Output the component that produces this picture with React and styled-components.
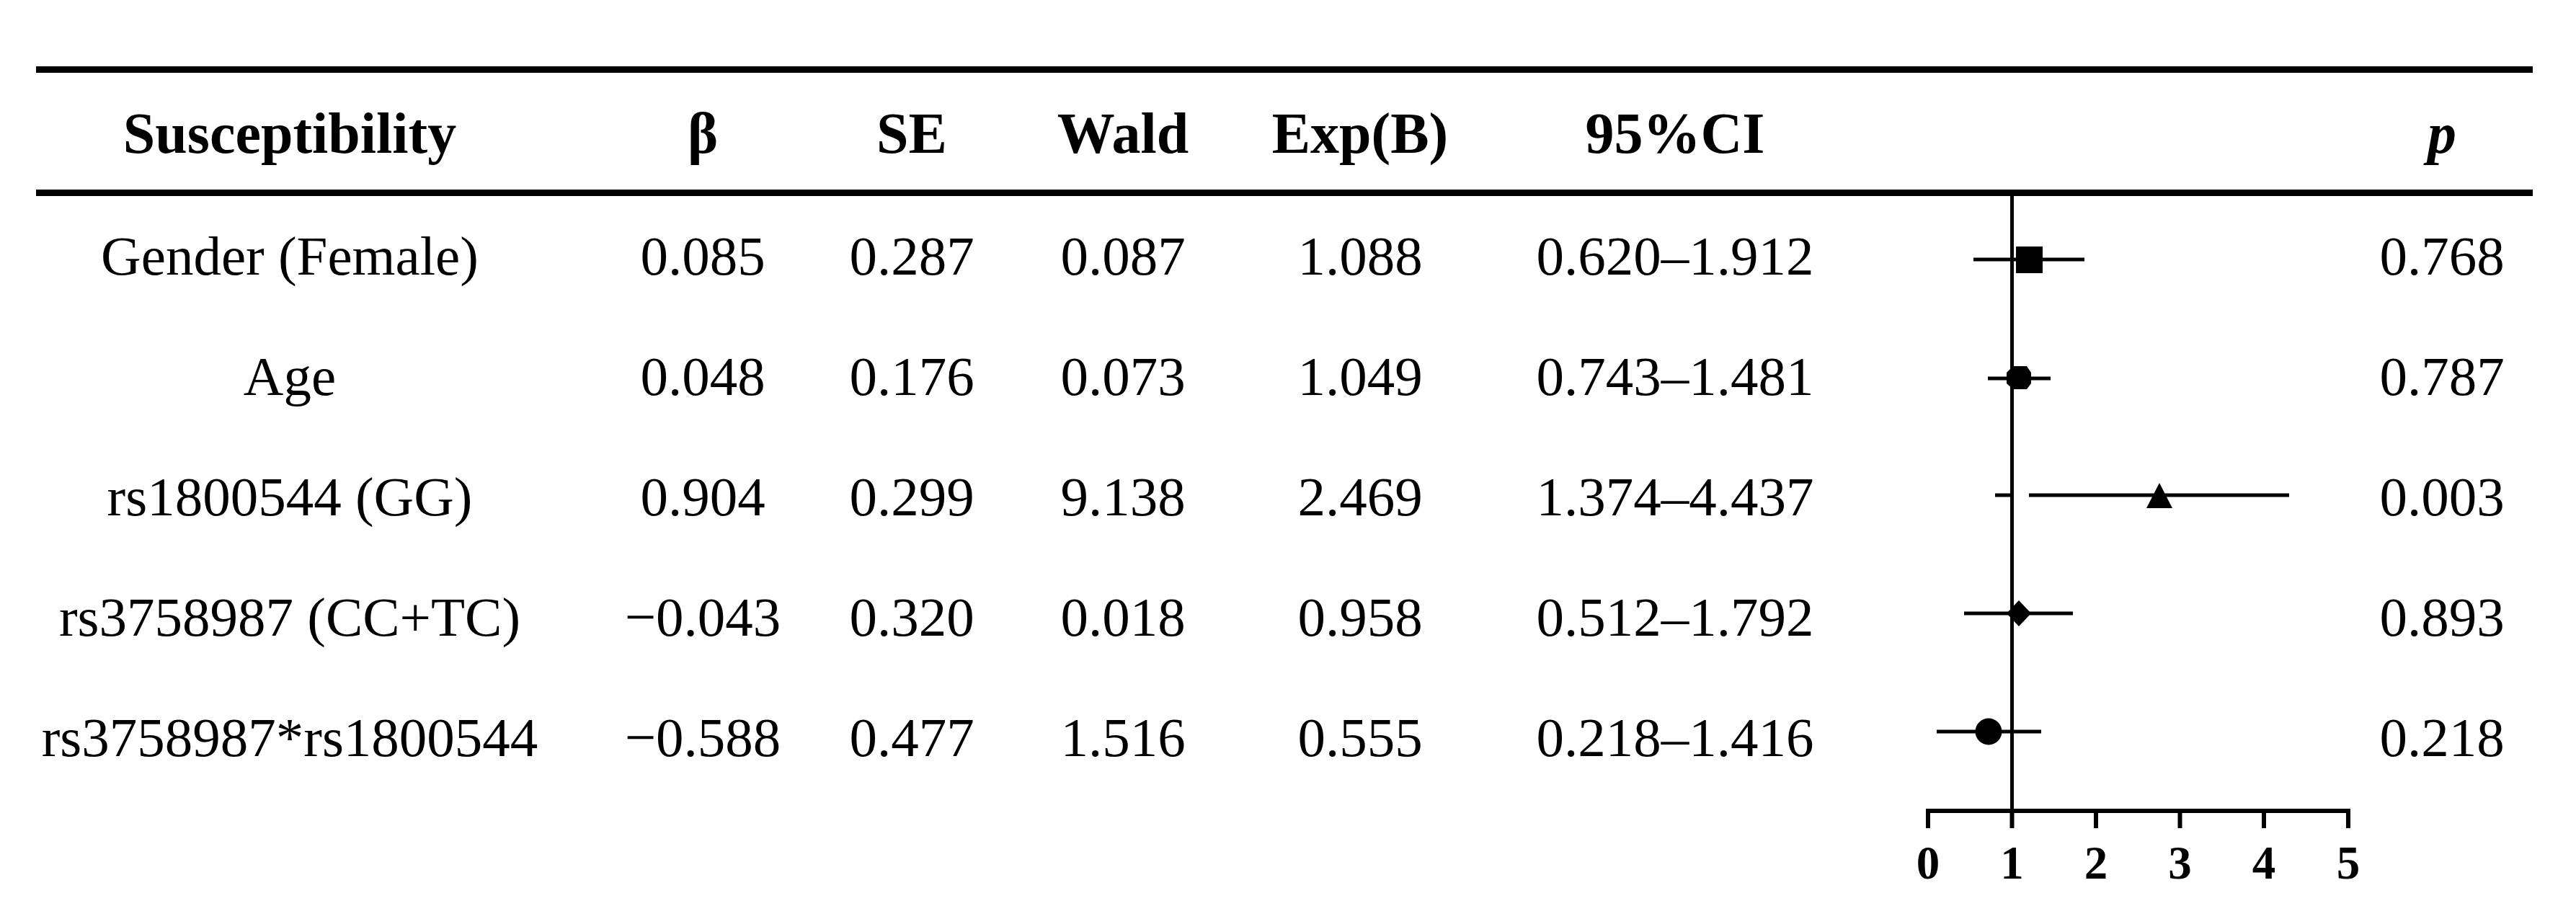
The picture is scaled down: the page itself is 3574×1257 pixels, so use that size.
import React from 'react'
import styled, { createGlobalStyle } from 'styled-components'

const GlobalStyle = createGlobalStyle`
    html, body {
        margin: 0;
        padding: 0;
        background: #fff;
    }
`

const COLS = '704px 442px 138px 448px 210px 664px 606px 252px'

const Page = styled.div`
    width: 3574px;
    height: 1257px;
    overflow: hidden;
    box-sizing: border-box;
    padding: 92px 0 0 50px;
    background: #fff;
    color: #000;
    font-family: "Liberation Serif", "Times New Roman", serif;
`

const Table = styled.div`
    width: 3464px;
    border-top: 9px solid #000;
`

const HeadRow = styled.div`
    display: grid;
    grid-template-columns: ${COLS};
    height: 162px;
    border-bottom: 9px solid #000;
`

const HeadCell = styled.div`
    display: flex;
    align-items: center;
    justify-content: center;
    padding-top: 6px;
    font-size: 80px;
    font-weight: 700;
    font-style: ${p => (p.$italic ? 'italic' : 'normal')};
    white-space: nowrap;
`

const Body = styled.div`
    display: grid;
    grid-template-columns: ${COLS};
    grid-template-rows: repeat(5, 167px) 115px;
`

const Cell = styled.div`
    grid-column: ${p => p.$col};
    grid-row: ${p => p.$row};
    display: flex;
    align-items: center;
    justify-content: center;
    font-size: 77px;
    white-space: nowrap;
`

const ChartCell = styled.div`
    grid-column: 7;
    grid-row: 1 / span 6;
`

const ChartSvg = styled.svg`
    display: block;
    overflow: visible;
`

const TickLabel = styled.text`
    font-family: "Liberation Serif", "Times New Roman", serif;
    font-weight: 700;
    font-size: 65px;
`

const rows = [
    { label: 'Gender (Female)', b: '0.085', se: '0.287', wald: '0.087', exp: '1.088', ci: '0.620–1.912', p: '0.768' },
    { label: 'Age', b: '0.048', se: '0.176', wald: '0.073', exp: '1.049', ci: '0.743–1.481', p: '0.787' },
    { label: 'rs1800544 (GG)', b: '0.904', se: '0.299', wald: '9.138', exp: '2.469', ci: '1.374–4.437', p: '0.003' },
    { label: 'rs3758987 (CC+TC)', b: '−0.043', se: '0.320', wald: '0.018', exp: '0.958', ci: '0.512–1.792', p: '0.893' },
    { label: 'rs3758987*rs1800544', b: '−0.588', se: '0.477', wald: '1.516', exp: '0.555', ci: '0.218–1.416', p: '0.218' },
]

// chart coords: x = page x - 2656, y = page y - 272
const marks = [
    { y: 88, segs: [[82, 236]], shape: 'square', cx: 159.5 },
    { y: 253, segs: [[102, 189]], shape: 'octagon', cx: 145 },
    { y: 415, segs: [[112, 133], [159, 520]], shape: 'triangle', cx: 340 },
    { y: 579, segs: [[69, 220]], shape: 'diamond', cx: 145 },
    { y: 743, segs: [[31, 176]], shape: 'circle', cx: 103 },
]

const ticks = [19, 135.5, 252, 368.5, 485, 602]

function Marker({ shape, cx, y }) {
    if (shape === 'square') return <rect x={cx - 18.5} y={y - 18} width="37" height="37" />
    if (shape === 'octagon') {
        const pts = [
            [cx - 8, y - 17], [cx + 11, y - 17], [cx + 17, y - 8], [cx + 17, y + 7],
            [cx + 11, y + 15], [cx - 8, y + 15], [cx - 17, y + 7], [cx - 17, y - 8],
        ]
        return <polygon points={pts.map(p => p.join(',')).join(' ')} />
    }
    if (shape === 'triangle') return <polygon points={`${cx},${y - 17} ${cx + 18},${y + 18} ${cx - 18},${y + 18}`} />
    if (shape === 'diamond') return <polygon points={`${cx},${y - 18} ${cx + 17},${y} ${cx},${y + 18} ${cx - 17},${y}`} />
    return <circle cx={cx} cy={y} r="18.5" />
}

function ForestPlot() {
    return (
        <ChartSvg width="606" height="960" viewBox="0 0 606 960">
            <line x1="135.5" y1="0" x2="135.5" y2="877" stroke="#000" strokeWidth="5" />
            {marks.map((m, i) => (
                <g key={i}>
                    {m.segs.map(([a, b], j) => (
                        <line key={j} x1={a} y1={m.y} x2={b} y2={m.y} stroke="#000" strokeWidth="5" />
                    ))}
                    <Marker {...m} />
                </g>
            ))}
            <line x1="16" y1="853" x2="605" y2="853" stroke="#000" strokeWidth="6" />
            {ticks.map((x, i) => (
                <g key={i}>
                    <line x1={x} y1="853" x2={x} y2="877" stroke="#000" strokeWidth="6" />
                    <TickLabel x={x} y="947" textAnchor="middle">{i}</TickLabel>
                </g>
            ))}
        </ChartSvg>
    )
}

function App() {
    return (
        <Page>
            <GlobalStyle />
            <Table>
                <HeadRow>
                    <HeadCell>Susceptibility</HeadCell>
                    <HeadCell>β</HeadCell>
                    <HeadCell>SE</HeadCell>
                    <HeadCell>Wald</HeadCell>
                    <HeadCell>Exp(B)</HeadCell>
                    <HeadCell>95%CI</HeadCell>
                    <HeadCell />
                    <HeadCell $italic>p</HeadCell>
                </HeadRow>
                <Body>
                    <ChartCell>
                        <ForestPlot />
                    </ChartCell>
                    {rows.map((r, i) => (
                        <React.Fragment key={r.label}>
                            <Cell $col={1} $row={i + 1}>{r.label}</Cell>
                            <Cell $col={2} $row={i + 1}>{r.b}</Cell>
                            <Cell $col={3} $row={i + 1}>{r.se}</Cell>
                            <Cell $col={4} $row={i + 1}>{r.wald}</Cell>
                            <Cell $col={5} $row={i + 1}>{r.exp}</Cell>
                            <Cell $col={6} $row={i + 1}>{r.ci}</Cell>
                            <Cell $col={8} $row={i + 1}>{r.p}</Cell>
                        </React.Fragment>
                    ))}
                </Body>
            </Table>
        </Page>
    )
}

export default App
